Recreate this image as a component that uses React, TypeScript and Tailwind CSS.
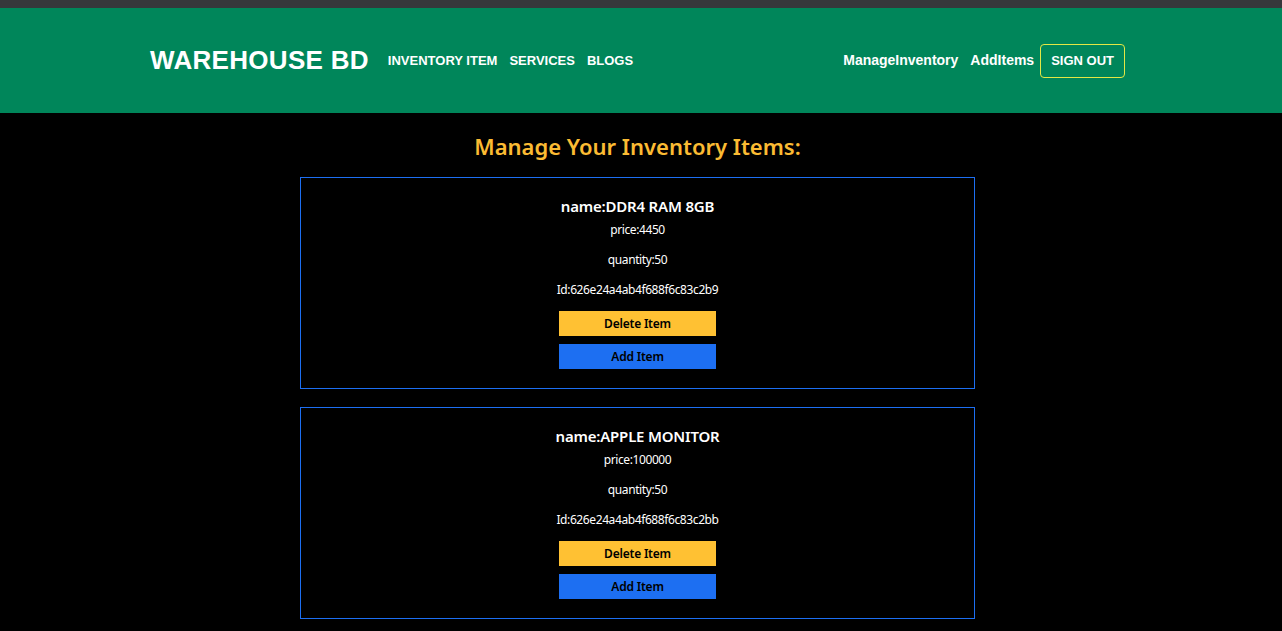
import React from 'react';

const items = [
  { name: 'DDR4 RAM 8GB', price: 4450, quantity: 50, id: '626e24a4ab4f688f6c83c2b9' },
  { name: 'APPLE MONITOR', price: 100000, quantity: 50, id: '626e24a4ab4f688f6c83c2bb' },
];

const headFont = { fontFamily: '"Liberation Sans", Arial, sans-serif' };

function ItemCard({ item }: { item: (typeof items)[number] }) {
  return (
    <div className="w-[675px] mx-auto border border-[#1d6ff2] pt-[16px] pb-[19px] flex flex-col items-center text-white">
      <h5 className="text-[15px] leading-[24px] font-semibold tracking-[-0.2px]">name:{item.name}</h5>
      <p className="text-[12px] leading-[20px] mt-[2px] tracking-[-0.4px]">price:{item.price}</p>
      <p className="text-[12px] leading-[20px] mt-[10px] tracking-[-0.4px]">quantity:{item.quantity}</p>
      <p className="text-[12px] leading-[20px] mt-[10px] tracking-[-0.4px]">Id:{item.id}</p>
      <button className="mt-[11px] w-[157px] h-[25px] bg-[#ffc133] text-black text-[12px] font-semibold tracking-[-0.2px]">
        Delete Item
      </button>
      <button className="mt-[8px] w-[157px] h-[25px] bg-[#1d6ff2] text-black text-[12px] font-semibold tracking-[-0.2px]">
        Add Item
      </button>
    </div>
  );
}

export default function App() {
  return (
    <div className="min-h-screen bg-black" style={{ fontFamily: '"Noto Sans", "Open Sans", sans-serif' }}>
      <div className="h-[8px] bg-[#36373b]" />
      {/* Navbar */}
      <div className="bg-[#00865a] h-[105px]">
        <div className="w-[1275px] h-full">
          <div className="w-[975px] mx-auto h-full flex items-center justify-between text-white" style={headFont}>
            <div className="flex items-center">
              <span className="text-[26px] font-bold tracking-[0.3px]">WAREHOUSE BD</span>
              <nav className="flex items-center gap-[12px] ml-[19px] text-[13px] font-bold">
                <a>INVENTORY ITEM</a>
                <a>SERVICES</a>
                <a>BLOGS</a>
              </nav>
            </div>
            <div className="flex items-center text-[14px] font-bold">
              <a>ManageInventory</a>
              <a className="ml-[12px]">AddItems</a>
              <button className="ml-[6px] h-[34px] px-[10px] border border-[#e4e845] rounded-[4px] text-[13px] font-bold">
                SIGN OUT
              </button>
            </div>
          </div>
        </div>
      </div>

      {/* Content */}
      <div className="w-[1275px] pb-[20px]">
        <h2 className="text-center text-[22px] leading-[30px] font-semibold text-[#fbbb33] mt-[18px] mb-[16px]">
          Manage Your Inventory Items:
        </h2>
        <div className="flex flex-col gap-[18px]">
          {items.map((item) => (
            <ItemCard key={item.id} item={item} />
          ))}
        </div>
      </div>
    </div>
  );
}
